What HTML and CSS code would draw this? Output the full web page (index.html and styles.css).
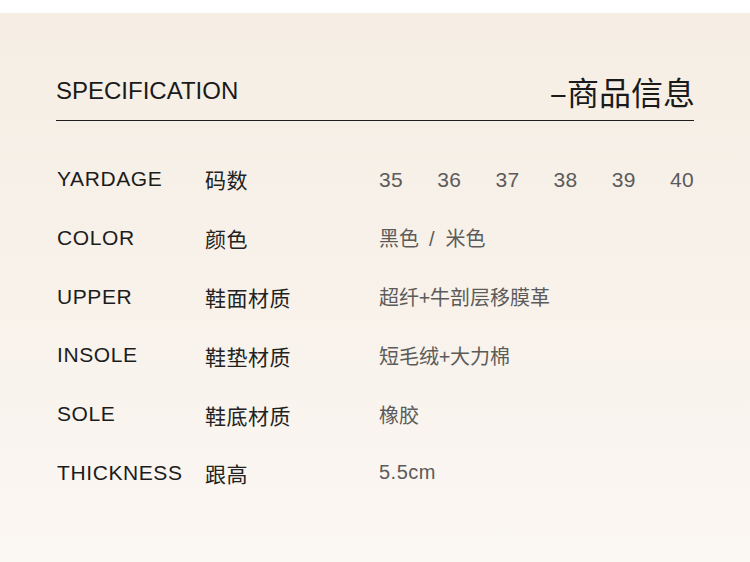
FILE: index.html
```html
<!DOCTYPE html>
<html lang="zh">
<head>
<meta charset="utf-8">
<title>SPECIFICATION</title>
<link rel="stylesheet" href="styles.css">
</head>
<body>
<div class="top-band"></div>
<section class="panel">
  <header class="header">
    <h1 class="title-en">SPECIFICATION</h1>
    <h2 class="title-cn">–商品信息</h2>
  </header>
  <div class="specs">
    <div class="row">
      <span class="label-en">YARDAGE</span>
      <span class="label-cn">码数</span>
      <span class="value sizes"><span>35</span><span>36</span><span>37</span><span>38</span><span>39</span><span>40</span></span>
    </div>
    <div class="row">
      <span class="label-en">COLOR</span>
      <span class="label-cn">颜色</span>
      <span class="value cn">黑色<span class="sep">/</span>米色</span>
    </div>
    <div class="row">
      <span class="label-en">UPPER</span>
      <span class="label-cn">鞋面材质</span>
      <span class="value cn">超纤+牛剖层移膜革</span>
    </div>
    <div class="row">
      <span class="label-en">INSOLE</span>
      <span class="label-cn">鞋垫材质</span>
      <span class="value cn">短毛绒+大力棉</span>
    </div>
    <div class="row">
      <span class="label-en">SOLE</span>
      <span class="label-cn">鞋底材质</span>
      <span class="value cn">橡胶</span>
    </div>
    <div class="row">
      <span class="label-en">THICKNESS</span>
      <span class="label-cn">跟高</span>
      <span class="value">5.5cm</span>
    </div>
  </div>
</section>
</body>
</html>
```
FILE: styles.css
```css
html, body {
  margin: 0;
  padding: 0;
  background: #ffffff;
}
body {
  width: 750px;
  height: 562px;
  overflow: hidden;
  font-family: "Liberation Sans", "Noto Sans CJK SC", sans-serif;
}
.top-band {
  height: 13px;
  background: #ffffff;
}
.panel {
  height: 549px;
  box-sizing: border-box;
  padding: 58px 56px 0 56px;
  background: linear-gradient(180deg, #f6eee4 0%, #f8f2eb 55%, #fbf7f3 100%);
}
.header {
  display: flex;
  justify-content: space-between;
  align-items: center;
  height: 40px;
  padding-bottom: 9px;
  border-bottom: 1px solid #1e1e1e;
}
.title-en {
  margin: 0;
  font-size: 24px;
  font-weight: normal;
  line-height: 40px;
  color: #1a1a1a;
}
.title-cn {
  margin: 0 -1px 0 0;
  font-size: 32px;
  font-weight: normal;
  line-height: 40px;
  color: #1a1a1a;
  font-family: "Noto Sans CJK SC", sans-serif;
}
.specs {
  margin-top: 28.6px;
}
.row {
  display: grid;
  grid-template-columns: 149px 174px 1fr;
  align-items: center;
  height: 58.8px;
}
.label-en {
  font-size: 21px;
  letter-spacing: 0.6px;
  color: #1c1c1c;
  padding-left: 1px;
}
.label-cn {
  font-family: "Noto Sans CJK SC", sans-serif;
  font-size: 21px;
  letter-spacing: 0.5px;
  color: #222222;
  padding-top: 1px;
}
.value {
  font-size: 20px;
  letter-spacing: 0.5px;
  color: #5c5b5a;
}
.value.cn {
  font-family: "Noto Sans CJK SC", sans-serif;
  letter-spacing: 0;
}
.sep {
  font-family: "Liberation Sans", sans-serif;
  margin: 0 11px 0 10px;
}
.sizes {
  display: flex;
  justify-content: space-between;
  font-size: 21px;
  letter-spacing: 0.3px;
  padding-top: 2px;
}
```
